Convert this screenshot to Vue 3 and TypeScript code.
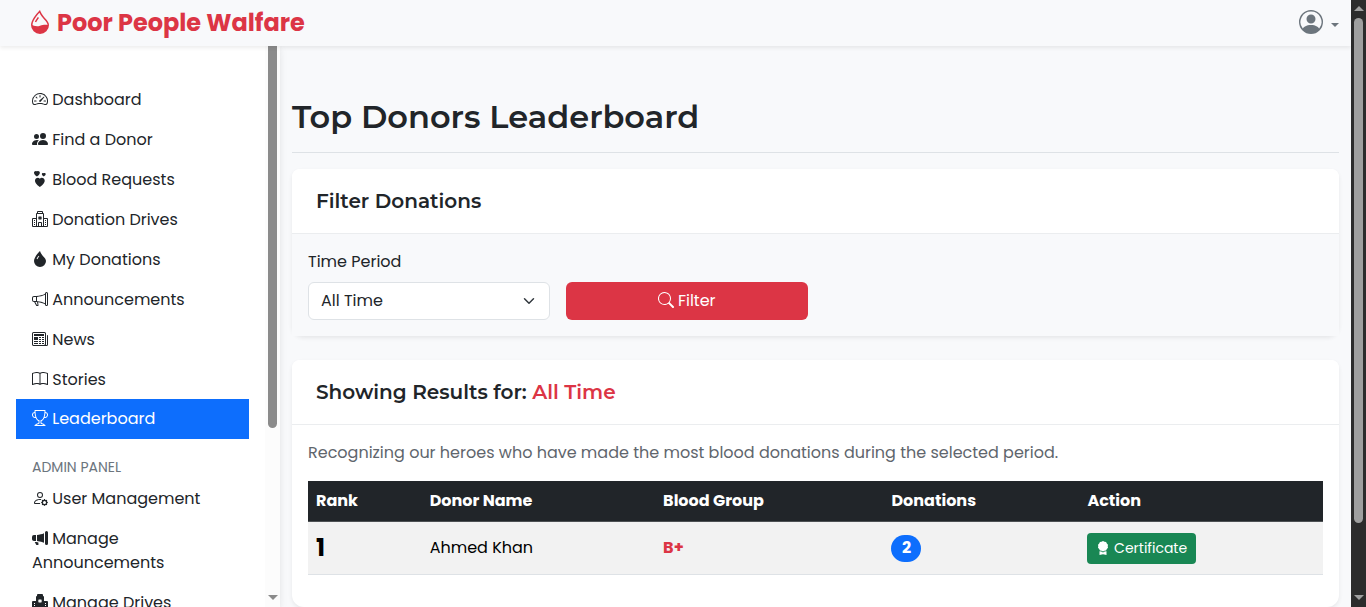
<script setup lang="ts">
import { ref } from 'vue'

interface NavItem {
  label: string
  icon: string
  active?: boolean
}

interface Donor {
  rank: number
  name: string
  group: string
  donations: number
}

const icons: Record<string, string> = {
  dropletHalf:
    'M7.21.8C7.69.295 8 0 8 0q.164.544.371 1.038c.812 1.946 2.073 3.35 3.197 4.6C12.878 7.096 14 8.345 14 10a6 6 0 0 1-12 0C2 6.668 5.58 2.517 7.21.8m.413 1.021A31 31 0 0 0 5.794 3.99c-.726.95-1.436 2.008-1.96 3.07C3.304 8.133 3 9.138 3 10c0 0 2.5 1.5 5 .5s5-.5 5-.5c0-1.201-.796-2.157-2.181-3.7l-.03-.032C9.75 5.11 8.5 3.72 7.623 1.82zM4.553 7.776c.82-1.641 1.717-2.753 2.093-3.13l.708.708c-.29.29-1.128 1.311-1.907 2.87z',
  droplet:
    'M8 16a6 6 0 0 0 6-6c0-1.655-1.122-2.904-2.432-4.362C10.254 4.176 8.75 2.503 8 0c0 0-6 5.686-6 10a6 6 0 0 0 6 6M6.646 4.646l.708.708c-.29.29-1.128 1.311-1.907 2.87l-.894-.448c.82-1.641 1.717-2.753 2.093-3.13',
  gauge:
    'M8 4a.5.5 0 0 1 .5.5V6a.5.5 0 0 1-1 0V4.5A.5.5 0 0 1 8 4M3.732 5.732a.5.5 0 0 1 .707 0l.915.914a.5.5 0 1 1-.708.708l-.914-.915a.5.5 0 0 1 0-.707M2 10a.5.5 0 0 1 .5-.5h1.586a.5.5 0 0 1 0 1H2.5A.5.5 0 0 1 2 10m9.5 0a.5.5 0 0 1 .5-.5h1.5a.5.5 0 0 1 0 1H12a.5.5 0 0 1-.5-.5m.754-4.246a.39.39 0 0 0-.527-.02L7.547 9.31a.91.91 0 1 0 1.302 1.258l3.434-4.297a.39.39 0 0 0-.029-.518zM0 10a8 8 0 1 1 15.547 2.661c-.442 1.253-1.845 1.602-2.932 1.25C11.309 13.488 9.475 13 8 13c-1.474 0-3.31.488-4.615.911-1.087.352-2.49.003-2.932-1.25A8 8 0 0 1 0 10m8-7a7 7 0 0 0-6.603 9.329c.203.575.923.876 1.68.63C4.397 12.533 6.358 12 8 12s3.604.532 4.923.96c.757.245 1.477-.056 1.68-.631A7 7 0 0 0 8 3',
  people:
    'M7 14s-1 0-1-1 1-4 5-4 5 3 5 4-1 1-1 1zm4-6a3 3 0 1 0 0-6 3 3 0 0 0 0 6m-5.784 6A2.24 2.24 0 0 1 5 13c0-1.355.68-2.75 1.936-3.72A6.3 6.3 0 0 0 5 9c-4 0-5 3-5 4s1 1 1 1zM4.5 8a2.5 2.5 0 1 0 0-5 2.5 2.5 0 0 0 0 5',
  hearts:
    'M4.931.481c1.627-1.671 5.692 1.254 0 5.015-5.692-3.76-1.626-6.686 0-5.015m6.84 1.794c1.084-1.114 3.795.836 0 3.343-3.795-2.507-1.084-4.457 0-3.343M7.84 7.642c2.71-2.786 9.486 2.09 0 8.358-9.487-6.268-2.71-11.144 0-8.358',
  hospital:
    'M8.5 5.034v1.1l.953-.55.5.867L9 7l.953.55-.5.866-.953-.55v1.1h-1v-1.1l-.953.55-.5-.866L7 7l-.953-.55.5-.866.953.55v-1.1zM13 9h1v1h-1zM13 11h1v1h-1zM13 13h1v1h-1zM2 9h1v1H2zM2 11h1v1H2zM2 13h1v1H2zM5 1a1 1 0 0 1 1-1h4a1 1 0 0 1 1 1v1a1 1 0 0 1 1 1v4h3a1 1 0 0 1 1 1v7a1 1 0 0 1-1 1H1a1 1 0 0 1-1-1V8a1 1 0 0 1 1-1h3V3a1 1 0 0 1 1-1zm2 14h2v-3H7zm3 0h1V3H5v12h1v-3a1 1 0 0 1 1-1h2a1 1 0 0 1 1 1zm0-14H6v1h4zm2 7v7h3V8zm-8 7V8H1v7z',
  hospitalFill:
    'M6 0a1 1 0 0 0-1 1v1a1 1 0 0 0-1 1v4H1a1 1 0 0 0-1 1v7a1 1 0 0 0 1 1h6v-2.5a.5.5 0 0 1 .5-.5h1a.5.5 0 0 1 .5.5V16h6a1 1 0 0 0 1-1V8a1 1 0 0 0-1-1h-3V3a1 1 0 0 0-1-1V1a1 1 0 0 0-1-1zM8.5 5.034v1.1l.953-.55.5.867L9 7l.953.55-.5.866-.953-.55v1.1h-1v-1.1l-.953.55-.5-.866L7 7l-.953-.55.5-.866.953.55v-1.1zM2 9h1v1H2zM2 11h1v1H2zM2 13h1v1H2zM13 9h1v1h-1zM13 11h1v1h-1zM13 13h1v1h-1z',
  megaphone:
    'M13 2.5a1.5 1.5 0 0 1 3 0v11a1.5 1.5 0 0 1-3 0v-.214c-2.162-1.241-4.49-1.843-6.912-2.083l.405 2.712A1 1 0 0 1 5.51 15.1h-.548a1 1 0 0 1-.916-.599l-1.85-3.49-.202-.003A2.014 2.014 0 0 1 0 9V7a2.02 2.02 0 0 1 1.992-2.013 75 75 0 0 0 2.483-.075c3.043-.154 6.148-.849 8.525-2.199zm1 0v11a.5.5 0 0 0 1 0v-11a.5.5 0 0 0-1 0m-1 1.35c-2.344 1.205-5.209 1.842-8 2.033v4.233q.27.015.537.036c2.568.189 5.093.744 7.463 1.993zm-9 6.215v-4.13a95 95 0 0 1-1.992.052A1.02 1.02 0 0 0 1 7v2c0 .55.448 1.002 1.006 1.009A61 61 0 0 1 4 10.065m-.657.975 1.609 3.037.01.024h.548l-.002-.014-.443-2.966a68 68 0 0 0-1.722-.082z',
  megaphoneFill:
    'M13 2.5a1.5 1.5 0 0 1 3 0v11a1.5 1.5 0 0 1-3 0zm-1 .724c-2.067.95-4.539 1.481-7 1.656v6.237a25 25 0 0 1 1.088.085c2.053.204 4.038.668 5.912 1.56zm-8 7.841V4.934c-.68.027-1.399.043-2.008.053A2.02 2.02 0 0 0 0 7v2c0 1.106.896 1.996 1.994 2.009l.496.008a64 64 0 0 1 1.51.048m1.39 1.081q.428.032.85.078l.253 1.69a1 1 0 0 1-.983 1.187h-.548a1 1 0 0 1-.916-.599l-1.314-2.48a66 66 0 0 1 1.692.064q.491.026.966.06',
  newspaper:
    'M0 2.5A1.5 1.5 0 0 1 1.5 1h11A1.5 1.5 0 0 1 14 2.5v10.528c0 .3-.05.654-.238.972h.738a.5.5 0 0 0 .5-.5v-9a.5.5 0 0 1 1 0v9a1.5 1.5 0 0 1-1.5 1.5H1.497A1.497 1.497 0 0 1 0 13.5zM12 14c.37 0 .654-.211.853-.441.092-.106.147-.279.147-.531V2.5a.5.5 0 0 0-.5-.5h-11a.5.5 0 0 0-.5.5v11c0 .278.223.5.497.5zM2 3h10v2H2zm0 3h4v3H2zm0 4h4v1H2zm0 2h4v1H2zm5-6h2v1H7zm3 0h2v1h-2zM7 8h2v1H7zm3 0h2v1h-2zm-3 2h2v1H7zm3 0h2v1h-2zm-3 2h2v1H7zm3 0h2v1h-2z',
  book:
    'M1 2.828c.885-.37 2.154-.769 3.388-.893 1.33-.134 2.458.063 3.112.752v9.746c-.935-.53-2.12-.603-3.213-.493-1.18.12-2.37.461-3.287.811zm7.5-.141c.654-.689 1.782-.886 3.112-.752 1.234.124 2.503.523 3.388.893v9.923c-.918-.35-2.107-.692-3.287-.81-1.094-.111-2.278-.039-3.213.492zM8 1.783C7.015.936 5.587.81 4.287.94c-1.514.153-3.042.672-3.994 1.105A.5.5 0 0 0 0 2.5v11a.5.5 0 0 0 .707.455c.882-.4 2.303-.881 3.68-1.02 1.409-.142 2.59.087 3.223.877a.5.5 0 0 0 .78 0c.633-.79 1.814-1.019 3.222-.877 1.378.139 2.8.62 3.681 1.02A.5.5 0 0 0 16 13.5v-11a.5.5 0 0 0-.293-.455c-.952-.433-2.48-.952-3.994-1.105C10.413.809 8.985.936 8 1.783',
  trophy:
    'M2.5.5A.5.5 0 0 1 3 0h10a.5.5 0 0 1 .5.5q0 .807-.034 1.536a3 3 0 1 1-1.133 5.89c-.79 1.865-1.878 2.777-2.833 3.011v2.173l1.425.356c.194.048.377.135.537.255L13.3 15.1a.5.5 0 0 1-.3.9H3a.5.5 0 0 1-.3-.9l1.838-1.379c.16-.12.343-.207.537-.255L6.5 13.11v-2.173c-.955-.234-2.043-1.146-2.833-3.012a3 3 0 1 1-1.132-5.89A33 33 0 0 1 2.5.5m.099 2.54a2 2 0 0 0 .72 3.935c-.333-1.05-.588-2.346-.72-3.935m10.083 3.935a2 2 0 0 0 .72-3.935c-.133 1.59-.388 2.885-.72 3.935M3.504 1q.01.775.056 1.469c.13 2.028.457 3.546.87 4.667C5.294 9.48 6.484 10 7 10a.5.5 0 0 1 .5.5v2.61a1 1 0 0 1-.757.97l-1.426.356a.5.5 0 0 0-.179.085L4.5 15h7l-.638-.479a.5.5 0 0 0-.18-.085l-1.425-.356a1 1 0 0 1-.757-.97V10.5A.5.5 0 0 1 9 10c.516 0 1.706-.52 2.57-2.864.413-1.12.74-2.64.87-4.667q.045-.694.056-1.469z',
  personGear:
    'M11 5a3 3 0 1 1-6 0 3 3 0 0 1 6 0M8 7a2 2 0 1 0 0-4 2 2 0 0 0 0 4m.256 7a4.5 4.5 0 0 1-.229-1.004H3c.001-.246.154-.986.832-1.664C4.484 10.68 5.711 10 8 10q.39 0 .74.025c.226-.341.496-.65.804-.918Q8.844 9.002 8 9c-5 0-6 3-6 4s1 1 1 1zm3.63-4.54c.18-.613 1.048-.613 1.229 0l.043.148a.64.64 0 0 0 .921.382l.136-.074c.561-.306 1.175.308.87.869l-.075.136a.64.64 0 0 0 .382.92l.149.045c.612.18.612 1.048 0 1.229l-.15.043a.64.64 0 0 0-.38.921l.074.136c.305.561-.309 1.175-.87.87l-.136-.075a.64.64 0 0 0-.92.382l-.045.149c-.18.612-1.048.612-1.229 0l-.043-.15a.64.64 0 0 0-.921-.38l-.136.074c-.561.305-1.175-.309-.87-.87l.075-.136a.64.64 0 0 0-.382-.92l-.148-.045c-.613-.18-.613-1.048 0-1.229l.148-.043a.64.64 0 0 0 .382-.921l-.074-.136c-.306-.561.308-1.175.869-.87l.136.075a.64.64 0 0 0 .92-.382zM14 12.5a1.5 1.5 0 1 0-3 0 1.5 1.5 0 0 0 3 0',
  personCircle:
    'M11 6a3 3 0 1 1-6 0 3 3 0 0 1 6 0M0 8a8 8 0 1 1 16 0A8 8 0 0 1 0 8m8-7a7 7 0 0 0-5.468 11.37C3.242 11.226 4.805 10 8 10s4.757 1.225 5.468 2.37A7 7 0 0 0 8 1',
  search:
    'M11.742 10.344a6.5 6.5 0 1 0-1.397 1.398h-.001q.044.06.098.115l3.85 3.85a1 1 0 0 0 1.415-1.414l-3.85-3.85a1 1 0 0 0-.115-.1zM12 6.5a5.5 5.5 0 1 1-11 0 5.5 5.5 0 0 1 11 0',
  award:
    'm8 0 1.669.864 1.858.282.842 1.68 1.337 1.32L13.4 6l.306 1.854-1.337 1.32-.842 1.68-1.858.282L8 12l-1.669-.864-1.858-.282-.842-1.68-1.337-1.32L2.6 6l-.306-1.854 1.337-1.32.842-1.68L6.331.864zM4 11.794V16l4-1 4 1v-4.206l-2.018.306L8 13.126 6.018 12.1z',
}

const mainNav: NavItem[] = [
  { label: 'Dashboard', icon: 'gauge' },
  { label: 'Find a Donor', icon: 'people' },
  { label: 'Blood Requests', icon: 'hearts' },
  { label: 'Donation Drives', icon: 'hospital' },
  { label: 'My Donations', icon: 'droplet' },
  { label: 'Announcements', icon: 'megaphone' },
  { label: 'News', icon: 'newspaper' },
  { label: 'Stories', icon: 'book' },
  { label: 'Leaderboard', icon: 'trophy', active: true },
]

const adminNav: NavItem[] = [
  { label: 'User Management', icon: 'personGear' },
  { label: 'Manage Announcements', icon: 'megaphoneFill' },
  { label: 'Manage Drives', icon: 'hospitalFill' },
]

const donors: Donor[] = [{ rank: 1, name: 'Ahmed Khan', group: 'B+', donations: 2 }]

const periods = ['All Time', 'This Month', 'This Year']
const period = ref('All Time')
const applied = ref('All Time')

function applyFilter() {
  applied.value = period.value
}
</script>

<template>
  <div class="window">
    <div class="page">
      <header class="navbar">
        <a class="brand" href="#">
          <svg class="icon" viewBox="0 0 16 16" aria-hidden="true"><path :d="icons.dropletHalf" /></svg>
          <span class="brand-name">Poor People Walfare</span>
        </a>
        <button class="account" type="button" aria-label="Account menu">
          <svg class="icon" viewBox="0 0 16 16" aria-hidden="true">
            <path fill-rule="evenodd" :d="icons.personCircle" />
          </svg>
          <span class="caret"></span>
        </button>
      </header>

      <div class="columns">
        <aside class="sidebar">
          <nav class="nav">
            <a
              v-for="item in mainNav"
              :key="item.label"
              href="#"
              class="nav-link"
              :class="{ active: item.active }"
            >
              <svg class="icon" viewBox="0 0 16 16" aria-hidden="true">
                <path fill-rule="evenodd" :d="icons[item.icon]" />
              </svg>
              {{ item.label }}
            </a>
            <h6 class="nav-title">ADMIN PANEL</h6>
            <a v-for="item in adminNav" :key="item.label" href="#" class="nav-link">
              <svg class="icon" viewBox="0 0 16 16" aria-hidden="true">
                <path fill-rule="evenodd" :d="icons[item.icon]" />
              </svg>
              {{ item.label }}
            </a>
          </nav>
          <div class="side-scroll" aria-hidden="true">
            <div class="side-thumb"></div>
            <div class="arrow down"></div>
          </div>
        </aside>

        <main class="content">
          <h1 class="title">Top Donors Leaderboard</h1>

          <section class="card">
            <h2 class="card-header">Filter Donations</h2>
            <form class="card-body filter" @submit.prevent="applyFilter">
              <label for="period">Time Period</label>
              <select id="period" v-model="period">
                <option v-for="p in periods" :key="p">{{ p }}</option>
              </select>
              <button class="btn-filter" type="submit">
                <svg class="icon" viewBox="0 0 16 16" aria-hidden="true">
                  <path fill-rule="evenodd" :d="icons.search" />
                </svg>
                Filter
              </button>
            </form>
          </section>

          <section class="card">
            <h2 class="card-header">
              Showing Results for: <span class="danger">{{ applied }}</span>
            </h2>
            <div class="card-body">
              <p class="intro">
                Recognizing our heroes who have made the most blood donations during the selected period.
              </p>
              <table>
                <colgroup>
                  <col class="c-rank" />
                  <col class="c-name" />
                  <col class="c-group" />
                  <col class="c-count" />
                  <col />
                </colgroup>
                <thead>
                  <tr>
                    <th scope="col">Rank</th>
                    <th scope="col">Donor Name</th>
                    <th scope="col">Blood Group</th>
                    <th scope="col">Donations</th>
                    <th scope="col">Action</th>
                  </tr>
                </thead>
                <tbody>
                  <tr v-for="d in donors" :key="d.rank">
                    <td class="rank">{{ d.rank }}</td>
                    <td>{{ d.name }}</td>
                    <td class="danger strong">{{ d.group }}</td>
                    <td><span class="badge">{{ d.donations }}</span></td>
                    <td>
                      <a class="btn-cert" href="#">
                        <svg class="icon" viewBox="0 0 16 16" aria-hidden="true">
                          <path :d="icons.award" />
                        </svg>
                        Certificate
                      </a>
                    </td>
                  </tr>
                </tbody>
              </table>
            </div>
          </section>
        </main>
      </div>
    </div>

    <div class="page-scroll" aria-hidden="true">
      <div class="arrow up"></div>
      <div class="page-thumb"></div>
      <div class="arrow down"></div>
    </div>
  </div>
</template>

<style>
body {
  margin: 0;
  overflow: hidden;
}
</style>

<style scoped>
* {
  box-sizing: border-box;
}

.window {
  display: flex;
  height: 100vh;
  overflow: hidden;
  background: #f8f9fb;
  color: #212529;
  font: 400 16px/24px Poppins, Inter, sans-serif;
}

.page {
  flex: 1;
  min-width: 0;
  display: flex;
  flex-direction: column;
}

.icon {
  width: 16px;
  height: 16px;
  fill: currentColor;
  vertical-align: -2px;
}

.danger {
  color: #dc3545;
}

.navbar {
  position: relative;
  z-index: 2;
  flex: none;
  display: flex;
  align-items: center;
  justify-content: space-between;
  height: 46px;
  padding: 0 12px 2px 28px;
  background: #f8f9fb;
  box-shadow: 0 2px 4px rgba(0, 0, 0, 0.075);
}

.brand {
  display: flex;
  align-items: center;
  gap: 5px;
  color: #dc3545;
  font-size: 24px;
  font-weight: 700;
  text-decoration: none;
}

.brand-name {
  padding-top: 2px;
}

.brand .icon,
.account .icon {
  width: 24px;
  height: 24px;
}

.account {
  display: flex;
  align-items: center;
  gap: 8px;
  padding: 0;
  border: 0;
  background: none;
  color: #6c757d;
}

.caret {
  margin-top: 5px;
  border: 4px solid transparent;
  border-top-color: currentColor;
  border-bottom: 0;
}

.columns {
  flex: 1;
  min-height: 0;
  display: flex;
}

.sidebar {
  position: relative;
  z-index: 1;
  flex: none;
  display: flex;
  width: 280px;
  background: #fff;
  box-shadow: 0 2px 5px rgba(0, 0, 0, 0.05), 0 2px 10px rgba(0, 0, 0, 0.05);
}

.nav {
  flex: 1;
  padding: 33px 16px 0;
  overflow: hidden;
}

.nav-link {
  display: block;
  padding: 9px 16px 7px;
  color: #212529;
  text-decoration: none;
}

.nav-link.active {
  padding: 8px 16px;
  background: #0d6efd;
  color: #fff;
}

.nav-title {
  margin: 17px 0 0;
  padding: 0 16px;
  color: #6c757d;
  font-size: 14px;
  font-weight: 400;
  line-height: 22px;
}

.side-scroll {
  display: flex;
  flex-direction: column;
  justify-content: space-between;
  align-items: center;
  width: 15px;
  padding-bottom: 7px;
  background: #fcfcfc;
  color: #8b8b8b;
}

.side-thumb {
  width: 9px;
  height: 69%;
  border-radius: 0 0 5px 5px;
  background: #8b8b8b;
}

.arrow {
  border: 5px solid transparent;
}

.arrow.down {
  border-top-color: currentColor;
  border-bottom: 0;
}

.arrow.up {
  border-bottom-color: currentColor;
  border-top: 0;
}

.page-scroll {
  flex: none;
  display: flex;
  flex-direction: column;
  align-items: center;
  width: 15px;
  padding: 6px 0 7px;
  background: #2c2c2c;
  color: #9f9f9f;
}

.page-scroll .down {
  margin-top: auto;
}

.page-thumb {
  width: 9px;
  height: 85%;
  margin-top: 7px;
  border-radius: 5px;
  background: #9f9f9f;
}

.content {
  flex: 1;
  min-width: 0;
  padding: 52px 12px 0;
}

.title {
  margin: 0 0 16px;
  padding-bottom: 16px;
  border-bottom: 1px solid #dee2e6;
  font: 600 32px/38px Montserrat, Inter, sans-serif;
}

.card {
  margin-bottom: 24px;
  border-radius: 8px 8px 12px 12px;
  background: #fff;
  box-shadow: 0 2px 4px rgba(0, 0, 0, 0.075);
}

.card-header {
  margin: 0;
  padding: 20px 24px;
  border-bottom: 1px solid #ebedef;
  border-radius: 8px 8px 0 0;
  background: #fff;
  font: 600 20px/24px Montserrat, Inter, sans-serif;
}

.card-body {
  padding: 16px;
}

.filter {
  display: grid;
  grid-template-columns: repeat(4, 1fr);
  gap: 8px 16px;
  background: #f8f9fb;
}

.filter label {
  grid-column: 1 / -1;
}

.filter select {
  height: 38px;
  padding: 6px 36px 6px 12px;
  border: 1px solid #dee2e6;
  border-radius: 6px;
  appearance: none;
  background: #fff
    url("data:image/svg+xml,%3csvg xmlns='http://www.w3.org/2000/svg' viewBox='0 0 16 16'%3e%3cpath fill='none' stroke='%23343a40' stroke-linecap='round' stroke-linejoin='round' stroke-width='2' d='m2 5 6 6 6-6'/%3e%3c/svg%3e")
    no-repeat right 12px center / 16px 12px;
  color: #212529;
  font: inherit;
}

.btn-filter {
  height: 38px;
  border: 0;
  border-radius: 6px;
  background: #dc3545;
  color: #fff;
  font: inherit;
}

.intro {
  margin: 0 0 16px;
  color: #5f666d;
}

table {
  width: 100%;
  margin-bottom: 16px;
  border-collapse: collapse;
  table-layout: fixed;
  color: #000;
}

.c-rank {
  width: 11.2%;
}

.c-name {
  width: 23%;
}

.c-group {
  width: 22.5%;
}

.c-count {
  width: 19.3%;
}

th {
  padding: 8px;
  border-bottom: 1px solid #4d5154;
  background: #212529;
  color: #fff;
  font-weight: 700;
  text-align: left;
}

td {
  height: 53px;
  padding: 0 8px;
  border-bottom: 1px solid #dee2e6;
  background: #f2f2f2;
}

.rank {
  font-size: 24px;
  font-weight: 700;
}

.strong {
  font-weight: 700;
}

.badge {
  display: inline-block;
  min-width: 30px;
  padding: 1px 10px 2px;
  border-radius: 14px;
  background: #0d6efd;
  color: #fff;
  font-weight: 700;
  text-align: center;
}

.btn-cert {
  display: inline-block;
  padding: 5px 9px;
  border-radius: 4px;
  background: #198754;
  color: #fff;
  font-size: 14px;
  line-height: 21px;
  text-decoration: none;
}

.btn-cert .icon {
  width: 14px;
  height: 14px;
}
</style>
